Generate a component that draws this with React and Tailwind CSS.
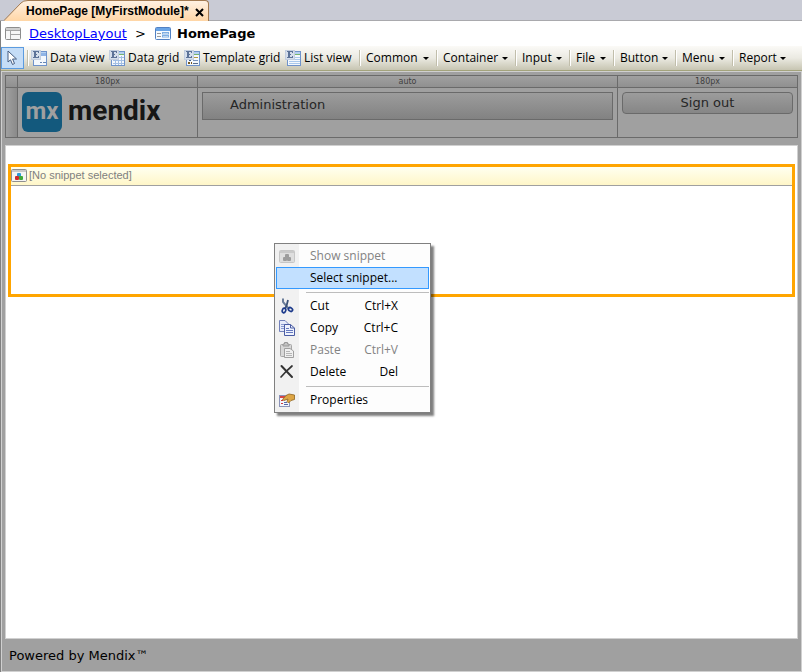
import React from 'react';

const UI = "font-['Open_Sans','Noto_Sans',sans-serif]";
const VERDANA = "font-['DejaVu_Sans',sans-serif]";

function ElementIcon({ kind }) {
  return (
    <svg width="16" height="16" viewBox="0 0 16 16" shapeRendering="crispEdges" className="shrink-0" aria-hidden="true">
      <rect x="2" y="1" width="14" height="15" fill="#6f93cb" />
      <rect x="3" y="2" width="12" height="13" fill="#f4f8fd" />
      <rect x="3" y="2" width="12" height="2" fill="#b4d0f0" />
      {kind === 'view' && (
        <>
          <rect x="9" y="3" width="6" height="3" fill="#8fb4e6" />
          <rect x="9" y="12" width="2" height="1" fill="#6687b4" />
          <rect x="12" y="12" width="3" height="1" fill="#6687b4" />
        </>
      )}
      {kind === 'grid' && (
        <>
          <rect x="10" y="4" width="5" height="1" fill="#77b56d" />
          <path d="M4 7.500H15M4 10.500H15M4 13.500H15M6.500 6V15M9.500 6V15M12.500 6V15" stroke="#a3bfe4" strokeWidth="1" />
        </>
      )}
      {kind === 'template' && (
        <>
          <rect x="10" y="4" width="5" height="1" fill="#77b56d" />
          <rect x="5" y="10" width="2" height="1" fill="#3f5d8b" />
          <rect x="4" y="12" width="2" height="2" fill="#7a5a22" />
          <rect x="7" y="12" width="1" height="2" fill="#7a5a22" />
          <rect x="9" y="10" width="5" height="1" fill="#7b95bd" />
          <rect x="9" y="13" width="5" height="1" fill="#556a89" />
          <rect x="10" y="7" width="4" height="1" fill="#b59a3d" />
        </>
      )}
      {kind === 'list' && (
        <>
          <rect x="10" y="4" width="5" height="1" fill="#77b56d" />
          <path d="M4 9.500H15M4 11.500H15M4 13.500H15M10 7.500H15" stroke="#a9c8ec" strokeWidth="1" />
        </>
      )}
      <rect x="0" y="0" width="10" height="10" fill="#c3cedf" />
      <rect x="1" y="1" width="8" height="8" fill="#d5deeb" />
      <path d="M2 1H8V3H7V2H5V4H6V5H5V7H7V6H8V8H2V7H3V2H2Z" fill="#5d7398" />
    </svg>
  );
}

function LayoutIcon() {
  return (
    <svg width="16" height="14" viewBox="0 0 16 14" className="shrink-0" aria-hidden="true">
      <rect x="0.500" y="0.500" width="15" height="12" rx="1" fill="#f7f7f7" stroke="#8d8d8d" />
      <path d="M1 3.500H15M5.500 4V12M6 7.500H15" stroke="#a5a5a5" />
      <rect x="1" y="1" width="14" height="2" fill="#cfcfcf" />
    </svg>
  );
}

function PageIcon() {
  return (
    <svg width="16" height="14" viewBox="0 0 16 14" className="shrink-0" aria-hidden="true">
      <rect x="0.500" y="0.500" width="15" height="12" rx="1" fill="#f5faff" stroke="#5181c4" />
      <rect x="1" y="1" width="14" height="3" fill="#69a4e6" />
      <path d="M2 6.500H6M2 9.500H6" stroke="#9a9a9a" />
      <rect x="7.500" y="5.500" width="6" height="1.500" fill="#fff" stroke="#7eaee2" />
      <rect x="7.500" y="8.500" width="6" height="1.500" fill="#fff" stroke="#7eaee2" />
    </svg>
  );
}

function SnippetIcon({ disabled }) {
  const c = disabled
    ? { edge: '#c6c6c6', fill: '#dedede', bar: '#c9c9c9', a: '#9c9c9c', b: '#9c9c9c', d: '#9c9c9c' }
    : { edge: '#8f8f8f', fill: '#f4f4f4', bar: '#c9c9c9', a: '#2c9ad6', b: '#cf2b2b', d: '#3fa83a' };
  return (
    <svg width="16" height="13" viewBox="0 0 16 13" className="shrink-0" aria-hidden="true">
      <rect x="0.500" y="0.500" width="15" height="12" rx="1" fill={c.fill} stroke={c.edge} />
      <rect x="1" y="1" width="14" height="2" fill={c.bar} />
      <rect x="6" y="4" width="4" height="4" rx="1" fill={c.a} />
      <rect x="4" y="7" width="4" height="4" rx="1" fill={c.b} />
      <rect x="8" y="7" width="4" height="4" rx="1" fill={c.d} />
    </svg>
  );
}

function CutIcon() {
  return (
    <svg width="16" height="16" viewBox="0 0 16 16" fill="none" aria-hidden="true">
      <path d="M4 0.500V4L9.500 10.500" stroke="#6b7d99" strokeWidth="2" />
      <path d="M9 2L7.500 8L6 10.500" stroke="#3c5278" strokeWidth="1.800" />
      <ellipse cx="5" cy="12.500" rx="1.700" ry="2.300" stroke="#1d3b8c" strokeWidth="1.700" transform="rotate(20 5 12.500)" />
      <ellipse cx="11.500" cy="11.500" rx="2.200" ry="1.700" stroke="#1d3b8c" strokeWidth="1.700" transform="rotate(35 11.500 11.500)" />
    </svg>
  );
}

function CopyIcon() {
  return (
    <svg width="16" height="16" viewBox="0 0 16 16" fill="none" aria-hidden="true">
      <path d="M0.500 0.500H6L9.500 4V11.500H0.500Z" fill="#e7ecfa" stroke="#7280ba" />
      <path d="M2 4.500H6M2 6.500H6M2 8.500H6" stroke="#8b9bd0" />
      <path d="M5.500 4.500H11.500L15.500 8V15.500H5.500Z" fill="#eef2fd" stroke="#4a5ca3" />
      <path d="M11.500 4.500V8H15.500" stroke="#4a5ca3" />
      <path d="M7 8.500H10M7 10.500H14M7 12.500H14" stroke="#6579bf" />
    </svg>
  );
}

function PasteIcon() {
  return (
    <svg width="16" height="16" viewBox="0 0 16 16" fill="none" aria-hidden="true">
      <rect x="1.500" y="2.500" width="11" height="12" rx="1" fill="#d8d8d8" stroke="#a6a6a6" />
      <path d="M4 4V2H5.500V0.500H8.500V2H10V4Z" fill="#c4c4c4" stroke="#999" />
      <path d="M5.500 6.500H11L14.500 9V15.500H5.500Z" fill="#f0f0f0" stroke="#a0a0a0" />
      <path d="M7 9.500H11M7 11.500H13M7 13.500H13" stroke="#b5b5b5" />
    </svg>
  );
}

function DeleteIcon() {
  return (
    <svg width="16" height="16" viewBox="0 0 16 16" fill="none" aria-hidden="true">
      <path d="M2.500 2L13 13" stroke="#333" strokeWidth="2" strokeLinecap="round" />
      <path d="M13 2L8 6.500L2 13" stroke="#333" strokeWidth="1.700" strokeLinecap="round" />
    </svg>
  );
}

function PropertiesIcon() {
  return (
    <svg width="16" height="16" viewBox="0 0 16 16" fill="none" aria-hidden="true">
      <rect x="0.500" y="3.500" width="10" height="11" fill="#f3f5fc" stroke="#8b93b8" />
      <rect x="1" y="4" width="6" height="2" fill="#d64545" />
      <path d="M2 8.500H4M2 11.500H4" stroke="#cc3a3a" />
      <path d="M5 12.500H9M5 10.500H8" stroke="#5468a8" />
      <path d="M3.500 7.500L7 3.500L10 2L15.500 3V7.500L12 8.500L9.500 11L8 9.500L9 7L5 8.500Z" fill="#dda544" stroke="#8f6420" strokeWidth="0.800" />
    </svg>
  );
}

function Caret() {
  return (
    <svg width="6" height="3" viewBox="0 0 6 3" className="mt-px shrink-0" aria-hidden="true">
      <path d="M0 0H6L3 3Z" fill="#000" />
    </svg>
  );
}

function Separator() {
  return <span className="h-4 w-0.5 shrink-0 border-r border-l border-r-white border-l-[#c1beab]" />;
}

const elements = [
  ['Data view', 'view', 'w-[78px]'],
  ['Data grid', 'grid', 'w-[75px]'],
  ['Template grid', 'template', 'w-[101px]'],
  ['List view', 'list', 'w-[74px]'],
];

const menus = [
  ['Common', 'w-[75px]'],
  ['Container', 'w-[77px]'],
  ['Input', 'w-[52px]'],
  ['File', 'w-[42px]'],
  ['Button', 'w-[60px]'],
  ['Menu', 'w-[55px]'],
  ['Report', 'w-[59px]'],
];

function TabStrip() {
  return (
    <div className="flex h-[21px] items-end border-b border-[#a9a9ad] bg-[#c9cbd5] pl-1">
      <div className="-mb-px flex h-[21px]">
        <svg width="24" height="21" viewBox="0 0 24 21" className="shrink-0" aria-hidden="true">
          <defs>
            <linearGradient id="tabFill" x1="0" y1="0" x2="0" y2="1">
              <stop offset="0" stopColor="#fff1e2" />
              <stop offset="1" stopColor="#ffd6a6" />
            </linearGradient>
          </defs>
          <path d="M0 21L17 3Q19 0.500 24 0.500V21Z" fill="url(#tabFill)" />
          <path d="M0 20.500L17 3Q19 0.500 24 0.500" fill="none" stroke="#a37b52" />
        </svg>
        <div className="flex w-[181px] items-center justify-between rounded-tr-sm border-t border-r border-[#a37b52] bg-linear-to-b from-[#fff1e2] to-[#ffd6a6] pr-1">
          <button type="button" className="-ml-0.5 font-['Liberation_Sans',sans-serif] text-xs leading-4 font-bold whitespace-nowrap">
            HomePage [MyFirstModule]*
          </button>
          <button type="button" aria-label="Close tab" className="mt-0.5">
            <svg width="9" height="9" viewBox="0 0 9 9" aria-hidden="true">
              <path d="M1 1L8 8M8 1L1 8" stroke="#000" strokeWidth="2" />
            </svg>
          </button>
        </div>
      </div>
    </div>
  );
}

function Breadcrumb() {
  return (
    <nav aria-label="Breadcrumb" className={`flex h-[25px] items-center bg-white pl-1 text-[13px] leading-4 ${VERDANA}`}>
      <LayoutIcon />
      <a href="#layout" className="ml-2 w-[98px] whitespace-nowrap text-[#0000ff] underline">DesktopLayout</a>
      <span className="ml-2 w-5">&gt;</span>
      <PageIcon />
      <span className="ml-1.5 font-bold">HomePage</span>
    </nav>
  );
}

function Toolbar() {
  return (
    <div role="toolbar" aria-label="Elements" className={`flex h-[25px] items-center border-b border-[#a3a37c] bg-linear-to-b from-[#fbfaf7] via-[#ebeae2] to-[#c7c5b2] text-xs ${UI}`}>
      <button type="button" aria-label="Select" aria-pressed="true" className="flex h-[22px] w-[23px] shrink-0 items-center justify-center border border-[#5b9be0] bg-[#c5ddf7]">
        <svg width="11" height="16" viewBox="0 0 11 16" aria-hidden="true">
          <path d="M1 1V12L3.500 9.800L5.500 14.500L7.500 13.500L5.600 9H9.500Z" fill="#fff" stroke="#435b80" />
        </svg>
      </button>
      <span className="w-[3px]" />
      <Separator />
      <span className="w-0.5" />
      {elements.map(([label, kind, width]) => (
        <button key={label} type="button" className={`flex h-5 shrink-0 items-center gap-[3px] whitespace-nowrap ${width}`}>
          <ElementIcon kind={kind} />
          {label}
        </button>
      ))}
      {menus.map(([label, width]) => (
        <React.Fragment key={label}>
          <Separator />
          <button type="button" aria-haspopup="menu" className={`flex h-5 shrink-0 items-center justify-between pr-[7px] pl-[5px] whitespace-nowrap ${width}`}>
            {label}
            <Caret />
          </button>
        </React.Fragment>
      ))}
    </div>
  );
}

function ColumnHead({ children, className = '' }) {
  return (
    <div className={`h-3 border-b border-[#6a6a6a] bg-linear-to-b from-[#a0a0a0] to-[#909090] text-center text-[8px] leading-[11px] text-[#404040] ${className}`}>
      {children}
    </div>
  );
}

function LayoutHeader() {
  return (
    <div className={`mx-[3px] grid h-[63px] grid-cols-[12px_180px_1fr_179px] border border-[#6a6a6a] text-[13px] text-[#262626] ${VERDANA}`}>
      <div className="border-r border-[#6a6a6a] bg-linear-to-r from-[#a0a0a0] to-[#8a8a8a]">
        <ColumnHead />
      </div>
      <div className="border-r border-[#6a6a6a]">
        <ColumnHead>180px</ColumnHead>
        <div className="flex items-center gap-1.5 pt-1 pl-1 font-['Roboto',sans-serif] font-bold">
          <span className="flex size-10 items-center justify-center rounded-md bg-[#13597d] pb-0.5 text-2xl leading-8 text-[#a0a0a0]">mx</span>
          <span className="pb-0.5 text-[28px] leading-8 text-[#161616]">mendix</span>
        </div>
      </div>
      <div className="border-r border-[#6a6a6a]">
        <ColumnHead>auto</ColumnHead>
        <div className="m-1 flex h-7 border border-[#6a6a6a] bg-linear-to-b from-[#9c9c9c] to-[#828282] pb-0.5 pl-[27px]">
          <button type="button">Administration</button>
        </div>
      </div>
      <div>
        <ColumnHead>180px</ColumnHead>
        <div className="p-1">
          <button type="button" className="h-[22px] w-full rounded-sm border border-[#6a6a6a] bg-linear-to-b from-[#9c9c9c] to-[#868686] leading-5">
            Sign out
          </button>
        </div>
      </div>
    </div>
  );
}

function MenuItem({ icon, label, shortcut, disabled, active }) {
  return (
    <button
      type="button"
      role="menuitem"
      disabled={disabled}
      className={`flex h-[22px] w-full items-center border pr-[30px] text-left whitespace-nowrap ${active ? 'border-[#3399ff] bg-[#c2e0ff]' : 'border-transparent'} ${disabled ? 'text-[#838383]' : 'text-black'}`}
    >
      <span className="flex w-[33px] shrink-0 items-center pl-0.5">{icon}</span>
      <span className="grow">{label}</span>
      <span>{shortcut}</span>
    </button>
  );
}

function MenuRule() {
  return (
    <div role="separator" className="flex h-1.5 items-center pl-[30px]">
      <span className="h-px w-full bg-[#bdbdbd]" />
    </div>
  );
}

function ContextMenu() {
  return (
    <div
      role="menu"
      className={`absolute top-[76px] left-[263px] w-[157px] border border-[#808080] bg-[#fdfdfd] bg-linear-to-r from-[#f1f1f1] from-[24px] to-[#fdfdfd] to-[24px] p-px text-xs leading-5 shadow-[3px_3px_2px_rgba(0,0,0,0.5)] ${UI}`}
    >
      <MenuItem icon={<SnippetIcon disabled />} label="Show snippet" disabled />
      <MenuItem label="Select snippet..." active />
      <MenuRule />
      <MenuItem icon={<CutIcon />} label="Cut" shortcut="Ctrl+X" />
      <MenuItem icon={<CopyIcon />} label="Copy" shortcut="Ctrl+C" />
      <MenuItem icon={<PasteIcon />} label="Paste" shortcut="Ctrl+V" disabled />
      <MenuItem icon={<DeleteIcon />} label="Delete" shortcut="Del" />
      <MenuRule />
      <MenuItem icon={<PropertiesIcon />} label="Properties" />
    </div>
  );
}

export default function App() {
  return (
    <div className="flex min-h-screen flex-col bg-[#c9cbd5] text-black">
      <TabStrip />
      <div className="flex grow flex-col border-l border-[#808080]">
        <Breadcrumb />
        <Toolbar />
        <main className="flex grow flex-col border border-[#d0d0d0] bg-[#a0a0a0] pt-[3px]">
          <LayoutHeader />
          <section className="mx-[3px] mt-[7px] grow border border-[#d0d0d0] bg-white px-0.5 pt-[18px]">
            <div className="relative h-[133px] border-[3px] border-[#ffa500]">
              <div className="flex h-[19px] items-center gap-0.5 border-b border-[#a0a0a0] bg-linear-to-b from-[#fffff0] to-[#fff6c8] pb-0.5 font-['Liberation_Sans',sans-serif] text-[11px] leading-4 text-[#808080]">
                <SnippetIcon />
                [No snippet selected]
              </div>
              <ContextMenu />
            </div>
          </section>
          <footer className={`flex h-8 items-center pt-px pl-[7px] text-[13px] leading-4 ${VERDANA}`}>Powered by Mendix™</footer>
        </main>
      </div>
    </div>
  );
}
